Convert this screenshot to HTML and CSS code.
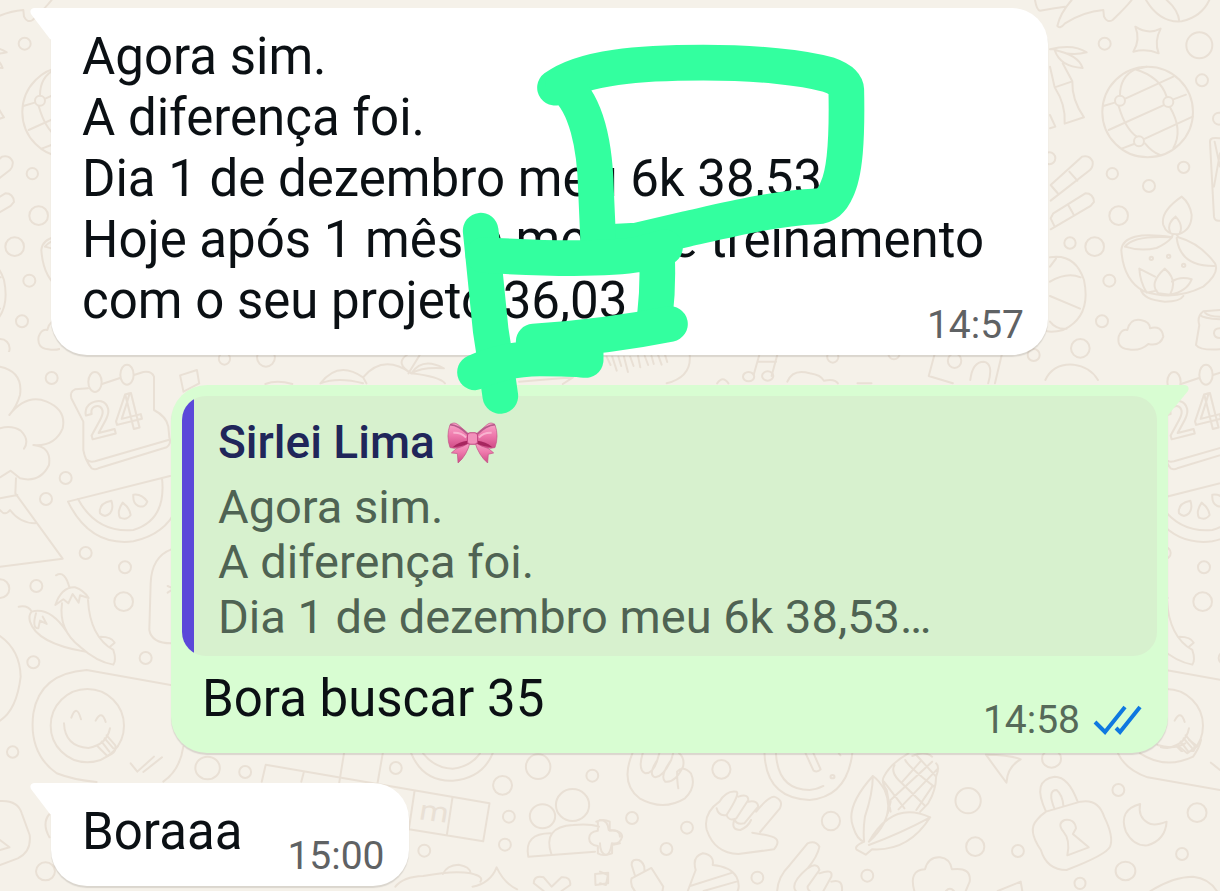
FILE: index.html
```html
<!DOCTYPE html>
<html lang="pt-BR">
<head>
<meta charset="utf-8">
<meta name="viewport" content="width=device-width, initial-scale=1">
<title>Sirlei Lima</title>
<link rel="stylesheet" href="styles.css">
</head>
<body>
<svg class="wallpaper" viewBox="0 0 1220 891" preserveAspectRatio="xMinYMin slice" aria-hidden="true">
  <defs>
    <g id="doodles">
      <!-- globe, bamboo, lamp -->
      <g transform="translate(1020 0) scale(.3333)">
        <path d="M45 0Q50 30 60 32Q100 25 135 20M155 0Q120 40 112 78Q120 88 135 70Q190 35 250 30L252 50Q262 70 278 60Q320 20 335 0M378 0Q420 70 485 64Q545 50 568 0M440 0Q475 30 478 64"/>
        <path d="M346 80Q385 105 422 86Q402 125 416 160Q380 145 340 155Q362 120 346 80Z"/>
        <path d="M90 148Q160 130 200 157Q150 170 104 148ZM104 150Q175 165 188 204Q120 200 104 150ZM90 200L104 262L157 244L128 190M104 262Q138 315 134 371L192 352Q155 300 157 244M90 345L106 380L90 385"/>
        <circle cx="383" cy="336" r="136"/>
        <path d="M345 208Q300 230 300 286M296 318Q315 385 350 410M375 430Q395 455 420 465M345 208Q420 230 440 290M450 322Q490 390 460 445M250 318L284 308M316 296L460 230M266 390L430 316M460 298L498 284M375 416L518 350M342 432L305 446M345 208L380 200"/>
        <circle cx="300" cy="302" r="15"/><circle cx="445" cy="306" r="15"/><circle cx="357" cy="424" r="15"/>
        <path d="M92 555L186 470Q210 464 218 485Q220 500 210 510L92 602M92 555L115 582M148 515L172 542M92 655L100 640L196 580Q220 580 222 606L212 618L92 688M92 655L104 680M145 616L160 642"/>
        <path d="M90 772Q165 760 192 840Q215 950 130 990Q100 998 80 994M90 800L108 776M90 845Q140 815 182 832M90 888L180 926M90 965Q110 990 140 986"/>
        <path d="M485 590Q420 635 430 675Q440 705 475 703Q515 690 515 645Q510 610 485 590ZM467 650Q440 672 450 695M467 650Q490 675 480 698M458 704L456 712Q310 690 304 750Q310 840 370 873Q460 905 550 860Q600 820 585 790Q540 730 475 712L470 704M315 740Q360 755 410 744Q440 730 456 712M315 740Q340 705 456 712M470 714Q480 800 585 798M362 868Q370 900 435 905Q480 905 490 888M358 806Q360 845 380 878L410 872M358 806L405 830M434 806Q385 850 415 880L450 884Q475 840 434 806ZM456 845Q480 828 515 838Q500 875 450 884"/>
        <circle cx="394" cy="775" r="5"/><circle cx="446" cy="769" r="5"/><circle cx="491" cy="796" r="5"/>
        <path d="M322 990Q330 955 362 960Q390 965 390 985Q425 975 430 1010Q420 1040 385 1032Q360 1055 325 1048Q290 1045 296 1010Q305 985 322 990Z"/>
        <path d="M600 415Q570 410 570 425L582 650Q584 665 600 662M584 425L600 500M582 560L600 460M600 930L550 934Q530 950 538 975L528 1035Q540 1052 600 1048M555 938Q565 950 600 950M540 945Q550 955 600 958M600 985Q582 985 582 1000Q584 1014 600 1014M76 1140Q100 1090 160 1094Q210 1100 234 1140"/>
        <circle cx="254" cy="131" r="18"/><circle cx="538" cy="136" r="39"/><circle cx="546" cy="241" r="18"/><circle cx="597" cy="356" r="18"/>
        <circle cx="277" cy="521" r="17"/><circle cx="491" cy="502" r="17"/><circle cx="387" cy="558" r="18"/><circle cx="296" cy="647" r="28"/>
        <circle cx="150" cy="729" r="17"/><circle cx="224" cy="740" r="28"/><circle cx="268" cy="842" r="18"/><circle cx="246" cy="964" r="18"/>
        <circle cx="181" cy="1045" r="28"/><circle cx="41" cy="1065" r="18"/><circle cx="88" cy="475" r="18"/>
      </g>
      <!-- tree, calendar, melon, peppers, smiley -->
      <g transform="translate(0 350) scale(.3333)">
        <path d="M0 50Q70 65 60 135Q50 170 28 195Q80 130 140 155Q200 180 188 235Q165 290 100 285Q155 290 147 345Q120 400 60 385L32 362L0 382M0 235Q35 225 62 242Q90 270 72 296M48 385L46 430L188 626L0 650M0 445L52 435M0 480Q15 500 30 480Q60 520 106 520"/>
        <path d="M264 115L225 118Q208 125 214 145L250 215V300Q255 330 275 355Q285 360 295 355L500 292Q515 280 508 262L505 230Q500 200 462 180V80Q455 62 430 66L402 75M306 102L360 84M262 330Q270 338 285 334L505 270"/>
        <ellipse cx="285" cy="96" rx="20" ry="30"/><ellipse cx="381" cy="74" rx="20" ry="30"/>
        <text x="270" y="270" class="digits" transform="rotate(-14 270 270)">24</text>
        <path d="M204 455L510 378M204 455Q270 590 400 574Q510 550 540 450L535 373M234 447Q290 550 400 540Q500 510 486 384"/>
        <path d="M334 452Q295 460 300 490Q315 505 330 490Q342 475 334 452ZM368 458Q350 485 360 503Q380 512 392 495Q390 475 368 458ZM400 434Q425 430 442 455Q435 475 415 468Q398 460 400 434Z"/>
        <path d="M168 676Q195 660 208 712M166 765Q185 710 225 712Q250 720 266 744L240 736L236 758L218 732L205 760L190 748ZM186 760Q175 840 240 890Q290 935 340 944Q350 930 340 900Q270 860 264 750M56 770Q85 765 95 785Q85 795 90 815Q110 880 255 905M95 785Q150 770 200 845M108 790Q95 835 115 835L120 812L140 822L128 800M302 860Q335 860 344 878L330 890"/>
        <path d="M514 598Q455 620 452 700L448 840Q455 880 514 880M503 708L512 712M503 728L512 722M0 858Q60 900 62 980Q50 1080 0 1112"/>
        <path d="M550 1190Q540 1260 490 1295M512 1005L260 960Q120 970 100 1090Q85 1210 170 1270Q220 1290 290 1296"/>
        <circle cx="262" cy="1127" r="110"/>
        <path d="M214 1103Q230 1060 243 1108M287 1112Q305 1078 317 1116M192 1120Q195 1190 265 1194Q320 1185 330 1135M292 1188L322 1218Q350 1210 346 1186L320 1156M305 1175L328 1205M314 1165L340 1195M392 1240L412 1265L462 1220M430 1266L486 1222"/>
        <circle cx="155" cy="84" r="18"/><circle cx="197" cy="384" r="18"/><circle cx="138" cy="447" r="18"/><circle cx="257" cy="609" r="18"/><circle cx="375" cy="652" r="18"/><circle cx="371" cy="755" r="28"/><circle cx="437" cy="924" r="18"/><circle cx="100" cy="937" r="18"/><circle cx="109" cy="708" r="18"/><circle cx="38" cy="1206" r="17"/><circle cx="0" cy="716" r="28"/>
      </g>
      <!-- strip between the first two messages -->
      <g transform="translate(170 340) scale(.5612 .3333)">
        <path d="M18 106L48 90L52 130L24 155ZM170 132Q190 118 218 132M268 130Q300 60 344 112Q380 40 430 100Q400 70 422 45M430 100Q450 50 488 85Q450 80 430 100Q480 110 490 130M425 100L445 45M344 112L350 130M268 130Q300 110 344 130M778 50L785 75M788 50L796 92M799 50L804 78M809 50L816 96M820 50L826 78M834 48L838 82M846 48L852 75M858 48L862 72M870 46L876 74M882 44L886 66M926 45Q930 110 885 130M1050 45L1040 105M1082 45L1072 108M1048 65L1080 65M975 130Q985 105 995 130M1100 125Q1110 85 1140 100Q1160 105 1165 122Q1185 115 1190 130M1225 130H1250M1362 45L1352 108L1395 130M1426 120Q1430 65 1450 65Q1468 70 1458 130M1482 45L1470 130M622 125L718 112L700 132"/>
        <ellipse cx="97" cy="56" rx="10" ry="18"/><ellipse cx="171" cy="52" rx="16" ry="28"/><ellipse cx="1031" cy="110" rx="10" ry="14"/><ellipse cx="1065" cy="108" rx="10" ry="14"/><ellipse cx="1181" cy="50" rx="10" ry="18"/><ellipse cx="1290" cy="40" rx="10" ry="18"/><ellipse cx="1398" cy="62" rx="12" ry="22"/>
      </g>
      <!-- bottom left: board, people -->
      <g transform="translate(0 740) scale(.3954 .3333)">
        <path d="M662 125L672 74L1238 190L1222 304L1034 268M768 98L762 125M870 40L858 128M968 40L954 135M1048 156L1034 268M1144 175L1130 286M1040 40Q1070 125 1145 122Q1220 115 1246 40M1070 40Q1100 85 1145 86Q1190 80 1214 40"/>
        <text x="1058" y="238" class="tile-letter" transform="rotate(8 1058 238)">m</text>
        <path d="M1336 350Q1325 280 1392 280M1336 350L1395 345L1505 335M1395 345Q1370 260 1450 255Q1490 250 1515 260M1508 245Q1525 235 1542 245V272Q1568 268 1568 290M1568 310L1548 315V340Q1525 350 1512 340V318Q1490 315 1490 295Q1490 275 1512 272V245"/>
        <ellipse cx="1372" cy="229" rx="32" ry="36"/><ellipse cx="1448" cy="195" rx="42" ry="48"/>
        <path d="M0 183Q45 180 55 220L75 285Q80 335 45 355L0 375M0 300L24 322L0 330M125 222Q105 250 125 292M1000 440Q1020 410 1070 408Q1150 390 1190 400Q1225 410 1215 425M1120 402Q1130 375 1160 374Q1190 380 1190 400M1195 440Q1240 430 1256 382Q1275 430 1308 448M1350 430Q1350 405 1375 412L1395 440L1420 412Q1445 410 1442 435L1420 453M1375 453L1350 430M1505 402L1538 398V430L1506 435Z"/>
        <ellipse cx="525" cy="84" rx="31" ry="34"/><ellipse cx="620" cy="96" rx="15" ry="18"/><ellipse cx="1001" cy="84" rx="15" ry="18"/><ellipse cx="1271" cy="136" rx="24" ry="28"/><ellipse cx="1361" cy="80" rx="31" ry="37"/><ellipse cx="1498" cy="107" rx="15" ry="18"/><ellipse cx="1287" cy="230" rx="15" ry="18"/><ellipse cx="1277" cy="314" rx="15" ry="18"/><ellipse cx="1073" cy="332" rx="15" ry="18"/><ellipse cx="115" cy="394" rx="24" ry="27"/>
      </g>
      <!-- bottom right: hands, corn, padlock, moon -->
      <g transform="translate(600 740) scale(.3954 .3333)">
        <path d="M82 40Q50 130 100 175Q160 215 215 175Q245 140 230 100Q210 75 195 95Q195 125 198 145M108 40Q95 90 115 100Q135 100 145 60M145 60Q120 105 140 112Q160 110 180 60M180 60Q150 110 165 125Q190 130 210 80Q215 55 200 40M145 60L150 40M180 60L185 40"/>
        <path d="M302 185Q260 220 270 270Q290 340 350 342L440 328Q460 300 435 290Q410 282 385 278M405 276L455 205Q465 180 440 170Q425 170 395 215M302 185Q320 150 345 155Q355 160 320 225Q300 230 295 205M350 170Q375 160 375 180L345 235Q325 245 320 225M375 185Q400 180 400 200L365 250Q345 255 340 238M340 238Q330 270 355 270Q375 260 382 240"/>
        <path d="M416 40Q420 175 530 180Q625 170 638 40M445 40Q450 150 530 150Q550 148 565 138M520 40L540 92Q550 98 558 88L540 40M604 40L608 46"/><circle cx="588" cy="110" r="5"/>
        <path d="M690 108Q620 200 640 260Q650 300 668 305Q640 320 650 330L672 344L688 328Q780 335 835 232Q740 180 680 305Q750 230 720 150Q705 120 690 108ZM690 108Q690 160 670 230Q665 270 668 305M835 232Q760 280 680 315M780 40Q735 70 718 110M718 110Q710 125 725 150L735 215M735 185L728 220M718 125L770 205M745 75Q735 95 755 120L820 195M772 60Q780 80 845 140M800 45L850 110Q860 80 850 70M840 50Q820 30 790 48M765 125L810 65M735 180L840 65M755 208L855 85M810 215L830 190Q850 150 850 110M800 210L840 140"/>
        <path d="M976 44Q1040 45 1064 58Q1030 80 1028 128Q1010 100 976 44Z"/>
        <path d="M1128 215Q1090 120 1150 110Q1185 110 1208 185M1150 208Q1130 150 1155 150Q1170 165 1172 198M1128 215L1215 185Q1260 175 1275 230Q1300 290 1290 320Q1280 345 1180 390Q1130 390 1115 330Q1080 270 1105 240Q1115 225 1128 215ZM1172 275Q1155 250 1175 240Q1200 235 1204 265L1196 282L1236 322L1182 346Q1190 300 1172 275Z"/>
        <path d="M1366 192Q1310 210 1330 275Q1350 320 1385 316Q1430 300 1433 245Q1400 260 1385 248Q1360 230 1366 192Z"/>
        <path d="M1310 40Q1330 90 1385 112L1568 150M1366 40Q1430 90 1500 50Q1515 25 1520 0M1410 15Q1450 30 1480 10M1465 20L1485 40L1510 18L1490 0M1545 68L1568 90"/>
        <path d="M80 415L130 384L160 440L158 453M80 415Q75 435 88 453M80 375Q80 355 98 360Q115 370 112 395M80 375L88 405M222 453L242 390Q232 350 260 340Q290 345 285 375Q330 380 345 410Q355 435 348 453M228 438L335 398M262 453L345 425M448 453Q450 410 480 375L525 310Q545 300 555 320Q550 350 525 385M525 385Q480 430 495 453M525 385Q550 365 555 390L525 440Q525 450 530 453M555 400Q590 385 585 410L565 453M585 425Q615 415 612 453M795 453Q780 390 822 388Q830 350 860 352Q885 355 890 388Q940 380 935 425L925 453M875 453Q885 440 895 453M1006 453L1064 425L1068 453M1392 453Q1450 410 1500 410Q1540 415 1560 453M0 395L20 405L15 435L0 430M0 240Q20 240 22 270Q55 270 56 290Q50 315 30 310Q25 345 15 345Q0 340 0 310"/>
        <ellipse cx="307" cy="88" rx="23" ry="28"/><ellipse cx="81" cy="234" rx="15" ry="18"/><ellipse cx="220" cy="263" rx="15" ry="18"/><ellipse cx="168" cy="327" rx="15" ry="18"/><ellipse cx="398" cy="413" rx="15" ry="18"/><ellipse cx="584" cy="243" rx="23" ry="28"/><ellipse cx="676" cy="407" rx="15" ry="18"/><ellipse cx="931" cy="182" rx="32" ry="38"/><ellipse cx="949" cy="320" rx="23" ry="28"/><ellipse cx="1057" cy="333" rx="15" ry="18"/><ellipse cx="1142" cy="56" rx="24" ry="27"/><ellipse cx="1311" cy="150" rx="15" ry="18"/><ellipse cx="1510" cy="218" rx="24" ry="28"/><ellipse cx="1472" cy="342" rx="15" ry="18"/><ellipse cx="1329" cy="393" rx="25" ry="28"/><ellipse cx="1214" cy="430" rx="14" ry="17"/>
      </g>
    </g>
    <clipPath id="repeat-right"><rect x="1160" y="352" width="60" height="400"/></clipPath>
    <clipPath id="repeat-left"><rect x="0" y="0" width="60" height="352"/></clipPath>
  </defs>
  <use href="#doodles"/>
  <g clip-path="url(#repeat-right)"><use href="#doodles" x="1079"/></g>
  <g clip-path="url(#repeat-left)"><use href="#doodles" x="-1080"/></g>
</svg>

<main class="chat">
  <article class="message incoming">
    <svg class="tail" viewBox="0 0 22 32" aria-hidden="true"><path d="M22 0H4Q-1 1 1 6L20 31L22 32Z"/></svg>
    <p class="text">Agora sim.<br>A diferença foi.<br>Dia 1 de dezembro meu 6k 38,53<br>Hoje após 1 mês e meio de treinamento<br>com o seu projeto 36,03</p>
    <footer class="meta"><time datetime="14:57">14:57</time></footer>
  </article>

  <article class="message outgoing">
    <svg class="tail" viewBox="0 0 22 32" aria-hidden="true"><path d="M0 0H18Q23 1 21 6L2 29L0 32Z"/></svg>
    <blockquote class="quote">
      <h2 class="author">Sirlei Lima
        <svg class="bow" viewBox="0 0 150 125" role="img" aria-label="laço">
          <defs>
            <linearGradient id="satin" x1="0" y1="0" x2="0" y2="1"><stop offset="0" stop-color="#f9a6c9"/><stop offset=".5" stop-color="#ee79ac"/><stop offset="1" stop-color="#cf4a86"/></linearGradient>
          </defs>
          <path d="M58 58Q25 80 12 92L30 94L32 122Q58 100 68 60ZM92 58Q125 80 138 92L122 96L120 122Q94 100 82 60Z" fill="url(#satin)" stroke="#c25086" stroke-width="2"/>
          <path d="M8 8Q20-2 32 8L62 34V64Q30 84 8 76Q-4 42 8 8ZM142 8Q130-2 118 8L88 34V64Q120 84 142 76Q154 42 142 8Z" fill="url(#satin)" stroke="#c25086" stroke-width="2"/>
          <path d="M8 8Q35 10 62 38M142 8Q115 10 88 38" fill="none" stroke="#b65b8b" stroke-width="5"/>
          <path d="M60 56Q36 58 16 75Q44 74 62 64ZM90 56Q114 58 134 75Q106 74 88 64Z" fill="#a7265f"/>
          <path d="M18 32Q40 30 56 46M132 32Q110 30 94 46" fill="none" stroke="#f9b3d0" stroke-width="6"/>
          <rect x="60" y="32" width="30" height="34" rx="9" fill="#f291bb" stroke="#c54985" stroke-width="3"/>
        </svg>
      </h2>
      <p class="excerpt">Agora sim.<br>A diferença foi.<br>Dia 1 de dezembro meu 6k 38,53…</p>
    </blockquote>
    <p class="text">Bora buscar 35</p>
    <footer class="meta"><time datetime="14:58">14:58</time>
      <svg class="checks" viewBox="0 0 50 32" role="img" aria-label="Lida"><path d="M3 18L13 28L33 3M24 24L28 28L48 3"/></svg>
    </footer>
  </article>

  <article class="message incoming short">
    <svg class="tail" viewBox="0 0 22 32" aria-hidden="true"><path d="M22 0H4Q-1 1 1 6L20 31L22 32Z"/></svg>
    <p class="text">Boraaa</p>
    <footer class="meta"><time datetime="15:00">15:00</time></footer>
  </article>

  <svg class="marker" viewBox="0 0 440 400" aria-hidden="true">
    <g transform="scale(.3333)">
      <path d="M345 173C430 110 600 98 790 98C950 98 1090 112 1165 134Q1217 152 1219 180C1222 330 1215 430 1190 480Q1170 528 1130 529C1000 535 860 570 740 597L590 632L475 638"/>
      <path d="M370 165C440 220 465 350 468 480L475 640"/>
      <path d="M122 602L152 900L165 985L181 1098"/>
      <path d="M130 675C300 685 500 690 600 672L675 652M650 660Q656 760 645 855"/>
      <path d="M690 882Q500 920 281 935V985M105 1027Q200 985 300 985T437 990L437 940"/>
    </g>
  </svg>
</main>
</body>
</html>
```
FILE: styles.css
```css
* { box-sizing: border-box; }

body {
  margin: 0;
  min-height: 100vh;
  position: relative;
  overflow: hidden;
  background: #f5f1e9;
  color: #0b1014;
  font-family: Roboto, "Liberation Sans", sans-serif;
}

p, h2, blockquote { margin: 0; }

.wallpaper {
  position: absolute;
  inset: 0;
  width: 100%;
  height: 100%;
  fill: none;
  stroke: #e9e0d5;
  stroke-width: 2px;
  stroke-linecap: round;
  stroke-linejoin: round;
}

.wallpaper path,
.wallpaper circle,
.wallpaper ellipse,
.wallpaper text { vector-effect: non-scaling-stroke; }

.digits { font-size: 150px; font-weight: 500; }
.tile-letter { font-size: 84px; fill: #e9e0d5; stroke: none; }

.chat {
  position: relative;
  display: flex;
  flex-direction: column;
  gap: 30px;
  padding: 8px 52px 5px 51px;
}

.message {
  position: relative;
  display: grid;
  border-radius: 36px;
  box-shadow: 0 2px 1px rgb(60 50 40 / 14%);
}

.incoming {
  align-self: flex-start;
  width: calc(100% - 120px);
  padding: 18px 24px 6px 31px;
  background: #fff;
  color: #0b1014;
  border-top-left-radius: 0;
}

.outgoing {
  align-self: flex-end;
  width: calc(100% - 120px);
  padding: 11px;
  background: #d8fdd2;
  border-top-right-radius: 0;
}

.short {
  display: flex;
  gap: 45px;
  width: auto;
}

.tail {
  position: absolute;
  top: 0;
  width: 22px;
  height: 32px;
}

.incoming .tail { left: -21px; fill: #fff; }
.outgoing .tail { right: -21px; fill: #d8fdd2; }

.text {
  grid-area: 2 / 1;
  margin-bottom: 18px;
  font-size: 51px;
  line-height: 61px;
}

.outgoing .text { padding: 12px 20px 0; margin-bottom: 13px; }

.meta {
  grid-area: 2 / 1;
  place-self: end;
  display: flex;
  align-items: center;
  gap: 12px;
  color: #5f6264;
  font-size: 39px;
  line-height: 48px;
}

.short .meta { align-self: flex-end; }

.outgoing { padding-bottom: 9px; }
.outgoing .text { margin-bottom: 15px; }
.outgoing .meta { color: #566a59; padding-right: 15px; }

.checks {
  width: 50px;
  height: 32px;
  fill: none;
  stroke: #0f78e0;
  stroke-width: 4px;
}

.quote {
  grid-area: 1 / 1;
  padding: 19px 24px 12px 36px;
  border-radius: 24px;
  background: linear-gradient(to right, #5b48d9 12px, #d7f1ce 12px);
  color: #4f6353;
}

.author {
  display: flex;
  align-items: center;
  gap: 12px;
  margin-bottom: 9px;
  color: #20265a;
  font-size: 46px;
  font-weight: 500;
  line-height: 55px;
}

.bow { width: 51px; height: 42px; }

.excerpt { font-size: 47px; line-height: 55px; }

.marker {
  position: absolute;
  top: 30px;
  left: 440px;
  width: 440px;
  height: 400px;
  fill: none;
  stroke: #33ff9f;
  stroke-width: 107px;
  stroke-linecap: round;
  stroke-linejoin: round;
  pointer-events: none;
}
```
